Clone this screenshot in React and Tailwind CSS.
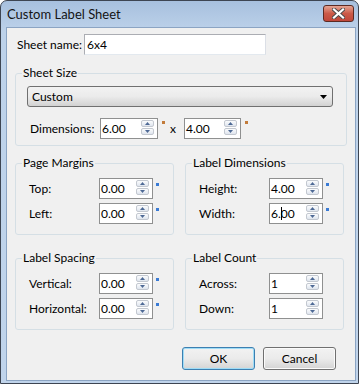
import React from "react";

const SpinBtn = ({ up }) => (
  <div className="w-[13px] h-[7px] border border-[#c3c8d0] rounded-[2px] bg-linear-to-b from-[#fbfcfd] to-[#dfe5ee] flex items-center justify-center">
    <svg width="5" height="3" viewBox="0 0 5 3">
      {up ? <path d="M2.5 0L5 3H0z" fill="#4d6995" /> : <path d="M0 0h5L2.5 3z" fill="#4d6995" />}
    </svg>
  </div>
);

const Spin = ({ value, width = "w-[54px]", cursor }) => (
  <div className={`${width} h-[21px] flex items-center border border-[#8f9090] bg-white`}>
    <span className="flex-1 pl-[1px] text-[12px] leading-none text-black flex items-center">
      {cursor ? (
        <>
          6.<span className="inline-block w-px h-[13px] bg-black -mr-px" />00
        </>
      ) : (
        value
      )}
    </span>
    <div className="flex flex-col gap-px mr-[3px] self-start mt-[1px]">
      <SpinBtn up />
      <SpinBtn />
    </div>
  </div>
);

const Row = ({ label, value, mark, cursor }) => (
  <div className="flex items-center h-[21px]">
    <span className="w-[70px]">{label}</span>
    <Spin value={value} cursor={cursor} />
    {mark && <span className="ml-[3px] self-start mt-[5px] w-[3px] h-[3px] bg-[#3b7bd4]" />}
  </div>
);

const Group = ({ title, children, className = "" }) => (
  <fieldset className={`border border-[#d5dfe5] rounded-[3px] ${className}`}>
    <legend className="ml-[6px] px-[1px] leading-[14px]">{title}</legend>
    {children}
  </fieldset>
);

export default function App() {
  return (
    <div className="w-[359px] h-[384px] bg-white font-['Lato',sans-serif] text-[12px] text-black">
      <div className="w-full h-full flex flex-col border border-[#3d4552] rounded-t-[7px] bg-linear-to-b from-[#a7c0de] via-[#bdd2ea] via-[8%] to-[#c0d4eb] overflow-hidden">
        {/* title bar */}
        <div className="h-[26px] flex items-start justify-between pl-[6px] pr-[4px]">
          <span className="mt-[6px] text-[13px] leading-[15px] text-[#141414]">Custom Label Sheet</span>
          <div className="mt-[4px] w-[31px] h-[17px] rounded-[3px] border border-[#5c2a22] bg-linear-to-b from-[#e4a493] via-[#cb5a48] via-50% to-[#c0473a] flex items-center justify-center">
            <svg width="13" height="11" viewBox="0 0 13 11">
              <path d="M2 1.5L11 9.5M11 1.5L2 9.5" stroke="#4a4a4a" strokeWidth="4" strokeLinecap="square" />
              <path d="M2 1.5L11 9.5M11 1.5L2 9.5" stroke="#ffffff" strokeWidth="2.2" strokeLinecap="square" />
            </svg>
          </div>
        </div>

        {/* client area */}
        <div className="flex-1 ml-[5px] mr-[2px] mb-[2px] border border-[#8ba4c3] bg-[#f0f0f0] px-[8px] pt-[6px]">
          <div className="flex items-center h-[21px]">
            <span className="pl-[2px] w-[69px]">Sheet name:</span>
            <div className="w-[182px] h-[21px] border border-[#abadb3] border-r-[#dbdfe6] border-b-[#e3e9ef] bg-white flex items-center pl-[2px]">
              6x4
            </div>
          </div>

          <Group title="Sheet Size" className="mt-[11px]">
            <div className="pl-[11px] pt-[6px] pb-[6px]">
              <div className="w-[306px] h-[21px] rounded-[3px] border border-[#707070] bg-linear-to-b from-[#f2f2f2] via-[#ebebeb] via-50% to-[#d2d2d2] flex items-center justify-between pl-[4px] pr-[5px]">
                <span>Custom</span>
                <svg width="7" height="4" viewBox="0 0 7 4">
                  <path d="M0 0h7L3.5 4z" fill="#000" />
                </svg>
              </div>
              <div className="flex items-center h-[21px] mt-[11px] pl-[3px]">
                <span className="w-[70px]">Dimensions:</span>
                <Spin value="6.00" width="w-[58px]" />
                <span className="ml-[4px] self-start mt-[3px] w-[3px] h-[3px] bg-[#c27b3a]" />
                <span className="ml-[5px] mr-[8px]">x</span>
                <Spin value="4.00" width="w-[57px]" />
                <span className="ml-[4px] self-start mt-[3px] w-[3px] h-[3px] bg-[#c27b3a]" />
              </div>
            </div>
          </Group>

          <div className="flex gap-[11px] mt-[10px]">
            <Group title="Page Margins" className="w-[159px]">
              <div className="pl-[13px] pt-[8px] pb-[10px] flex flex-col gap-[4px]">
                <Row label="Top:" value="0.00" mark />
                <Row label="Left:" value="0.00" mark />
              </div>
            </Group>
            <Group title="Label Dimensions" className="w-[159px]">
              <div className="pl-[13px] pt-[8px] pb-[10px] flex flex-col gap-[4px]">
                <Row label="Height:" value="4.00" mark />
                <Row label="Width:" value="6.00" mark cursor />
              </div>
            </Group>
          </div>

          <div className="flex gap-[11px] mt-[16px]">
            <Group title="Label Spacing" className="w-[159px]">
              <div className="pl-[13px] pt-[8px] pb-[10px] flex flex-col gap-[4px]">
                <Row label="Vertical:" value="0.00" mark />
                <Row label="Horizontal:" value="0.00" mark />
              </div>
            </Group>
            <Group title="Label Count" className="w-[159px]">
              <div className="pl-[13px] pt-[8px] pb-[10px] flex flex-col gap-[4px]">
                <Row label="Across:" value="1" />
                <Row label="Down:" value="1" />
              </div>
            </Group>
          </div>

          <div className="flex justify-end gap-[8px] mt-[17px] pr-[11px]">
            <button className="w-[73px] h-[23px] rounded-[3px] border border-[#3c7fb1] shadow-[inset_0_0_0_1px_#9fdcf6] bg-linear-to-b from-[#f2f2f2] via-[#ebebeb] via-50% to-[#d4d4d4]">
              OK
            </button>
            <button className="w-[73px] h-[23px] rounded-[3px] border border-[#707070] shadow-[inset_0_0_0_1px_#fbfbfb] bg-linear-to-b from-[#f2f2f2] via-[#ebebeb] via-50% to-[#d4d4d4]">
              Cancel
            </button>
          </div>
        </div>
      </div>
    </div>
  );
}
